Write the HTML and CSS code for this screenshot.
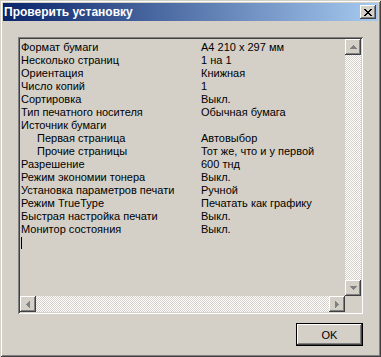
FILE: index.html
```html
<!DOCTYPE html>
<html lang="ru">
<head>
    <meta charset="UTF-8">
    <title>Проверить установку</title>
    <link rel="stylesheet" href="styles.css">
</head>
<body>
    <div class="window">
        <div class="titlebar">
            <span class="title">Проверить установку</span>
            <div class="close">
                <svg width="8" height="7" viewBox="0 0 8 7"><path d="M0 0h2v1H0zM6 0h2v1H6zM1 1h2v1H1zM5 1h2v1H5zM2 2h4v1H2zM3 3h2v1H3zM2 4h4v1H2zM1 5h2v1H1zM5 5h2v1H5zM0 6h2v1H0zM6 6h2v1H6z" fill="#000"/></svg>
            </div>
        </div>

        <div class="body">
            <div class="box">
                <div class="view">
                    <div class="list">
                        <div class="row"><span class="key">Формат бумаги</span><span>A4 210 x 297 мм</span></div>
                        <div class="row"><span class="key">Несколько страниц</span><span>1 на 1</span></div>
                        <div class="row"><span class="key">Ориентация</span><span>Книжная</span></div>
                        <div class="row"><span class="key">Число копий</span><span>1</span></div>
                        <div class="row"><span class="key">Сортировка</span><span>Выкл.</span></div>
                        <div class="row"><span class="key">Тип печатного носителя</span><span>Обычная бумага</span></div>
                        <div class="row"><span class="key">Источник бумаги</span><span></span></div>
                        <div class="row sub"><span class="key">Первая страница</span><span>Автовыбор</span></div>
                        <div class="row sub"><span class="key">Прочие страницы</span><span>Тот же, что и у первой</span></div>
                        <div class="row"><span class="key">Разрешение</span><span>600 тнд</span></div>
                        <div class="row"><span class="key">Режим экономии тонера</span><span>Выкл.</span></div>
                        <div class="row"><span class="key">Установка параметров печати</span><span>Ручной</span></div>
                        <div class="row"><span class="key">Режим TrueType</span><span>Печатать как графику</span></div>
                        <div class="row"><span class="key">Быстрая настройка печати</span><span>Выкл.</span></div>
                        <div class="row"><span class="key">Монитор состояния</span><span>Выкл.</span></div>
                        <div class="row"><span class="caret"></span></div>
                    </div>

                    <div class="vscroll">
                        <div class="sbtn">
                            <svg width="7" height="4" viewBox="0 0 7 4"><path d="M3 0h1v1H3zM2 1h3v1H2zM1 2h5v1H1zM0 3h7v1H0z" fill="#808080"/></svg>
                        </div>
                        <div class="track"></div>
                        <div class="sbtn">
                            <svg width="7" height="4" viewBox="0 0 7 4"><path d="M0 0h7v1H0zM1 1h5v1H1zM2 2h3v1H2zM3 3h1v1H3z" fill="#808080"/></svg>
                        </div>
                    </div>

                    <div class="hscroll">
                        <div class="sbtn">
                            <svg width="4" height="7" viewBox="0 0 4 7"><path d="M0 3h1v1H0zM1 2h1v3H1zM2 1h1v5H2zM3 0h1v7H3z" fill="#808080"/></svg>
                        </div>
                        <div class="track"></div>
                        <div class="sbtn">
                            <svg width="4" height="7" viewBox="0 0 4 7"><path d="M0 0h1v7H0zM1 1h1v5H1zM2 2h1v3H2zM3 3h1v1H3z" fill="#808080"/></svg>
                        </div>
                    </div>

                    <div class="corner"></div>
                </div>
            </div>

            <div class="actions">
                <button class="ok">OK</button>
            </div>
        </div>
    </div>
</body>
</html>
```

FILE: styles.css
```css
body {
    margin: 0;
    font-family: 'Liberation Sans', Arial, sans-serif;
    font-size: 11px;
    color: #000;
    background: #d4d0c8;
}
.window {
    width: 381px;
    height: 357px;
    box-sizing: border-box;
    padding: 3px;
    background: #d4d0c8;
    box-shadow: inset 1px 1px #d4d0c8, inset -1px -1px #404040,
                inset 2px 2px #fff, inset -2px -2px #808080;
}
.titlebar {
    height: 18px;
    display: flex;
    align-items: center;
    padding: 0 2px 0 1px;
    background: linear-gradient(to right, #0a246a, #a6caf0);
}
.title {
    flex: 1;
    color: #fff;
    font-weight: bold;
    font-size: 12px;
}
.close {
    width: 16px;
    height: 14px;
    box-sizing: border-box;
    display: flex;
    align-items: center;
    justify-content: center;
    background: #d4d0c8;
    box-shadow: inset -1px -1px #404040, inset 1px 1px #fff, inset -2px -2px #808080;
}
.body {
    padding: 16px 15px 0 15px;
}
.box {
    width: 345px;
    height: 277px;
    box-sizing: border-box;
    padding: 2px;
    box-shadow: inset 1px 1px #808080, inset -1px -1px #fff,
                inset 2px 2px #404040, inset -2px -2px #d4d0c8;
}
.view {
    display: grid;
    grid-template-columns: 325px 16px;
    grid-template-rows: 257px 16px;
}
.list {
    padding: 2px 0 0 1px;
    overflow: hidden;
}
.row {
    display: flex;
    height: 13px;
    line-height: 13px;
    white-space: nowrap;
}
.key {
    width: 180px;
    flex: none;
    box-sizing: border-box;
}
.row.sub .key {
    padding-left: 16px;
}
.caret {
    width: 1px;
    height: 12px;
    margin-top: 1px;
    background: #000;
}
.vscroll {
    display: flex;
    flex-direction: column;
}
.hscroll {
    display: flex;
}
.track {
    flex: 1;
    background: repeating-conic-gradient(#fff 0 25%, #d4d0c8 0 50%) 0 0 / 2px 2px;
}
.sbtn {
    width: 16px;
    height: 16px;
    flex: none;
    box-sizing: border-box;
    display: flex;
    align-items: center;
    justify-content: center;
    background: #d4d0c8;
    box-shadow: inset -1px -1px #404040, inset 1px 1px #fff, inset -2px -2px #808080;
}
.corner {
    background: #d4d0c8;
}
.actions {
    display: flex;
    justify-content: flex-end;
    margin-top: 9px;
}
.ok {
    width: 67px;
    height: 23px;
    padding: 0;
    border: 1px solid #000;
    background: #d4d0c8;
    box-shadow: inset -1px -1px #404040, inset 1px 1px #fff, inset -2px -2px #808080;
    font-family: 'Liberation Sans', Arial, sans-serif;
    font-size: 11px;
    color: #000;
}
```
